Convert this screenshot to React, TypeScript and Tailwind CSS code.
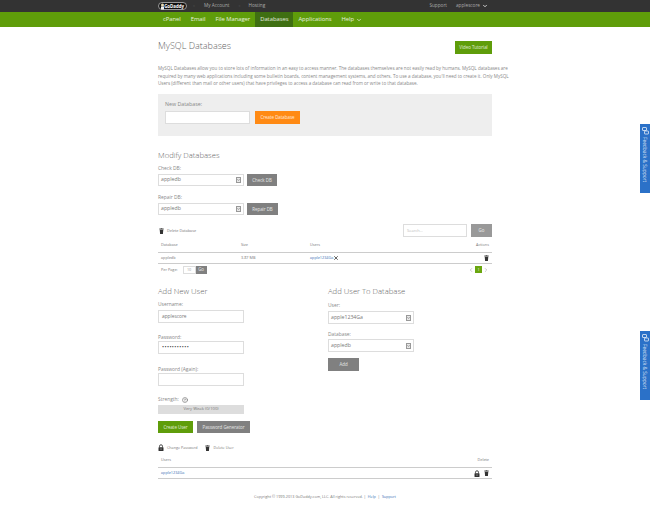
import { X, ChevronDown, ChevronLeft, ChevronRight, HelpCircle } from "lucide-react";

const nav = ["cPanel", "Email", "File Manager", "Databases", "Applications"];

function TrashIcon({ className = "" }: { className?: string }) {
  return (
    <svg width="5" height="6" viewBox="0 0 10 12" fill="#333" className={className}>
      <rect x="3.5" y="0" width="3" height="1.2" />
      <rect x="0.5" y="1.2" width="9" height="1.6" />
      <path d="M1.5 3.4h7l-.6 8.6H2.1z" />
    </svg>
  );
}

function LockIcon({ className = "" }: { className?: string }) {
  return (
    <svg width="6" height="7" viewBox="0 0 12 14" className={className}>
      <path d="M3 7V4.5a3 3 0 0 1 6 0V7" fill="none" stroke="#333" strokeWidth="1.7" />
      <rect x="1" y="6.5" width="10" height="7.5" rx="1" fill="#333" />
      <rect x="5.2" y="8.8" width="1.6" height="2.8" fill="#bbb" />
    </svg>
  );
}

function Heading({ children }: { children: React.ReactNode }) {
  return <h2 className="text-[7.7px] leading-[12px] font-light text-[#666]">{children}</h2>;
}

function Label({ children }: { children: React.ReactNode }) {
  return <div className="text-[4.9px] leading-[7px] text-[#888]">{children}</div>;
}

function Btn({ children, className }: { children: React.ReactNode; className: string }) {
  return (
    <div className={`flex items-center justify-center text-[4.4px] text-white/80 ${className}`}>{children}</div>
  );
}

function FakeSelect({ value, tall }: { value: string; tall?: boolean }) {
  return (
    <div className={`flex items-center justify-between w-[86px] bg-white border border-[#ddd] pl-[2px] pr-[2px] text-[5.2px] text-[#777] ${tall ? "h-[13px]" : "h-[12px]"}`}>
      <span>{value}</span>
      <span className="flex items-center justify-center w-[5px] h-[6px] bg-[#e8e8e8] border border-[#999]">
        <ChevronDown size={4} strokeWidth={4} className="text-[#333]" />
      </span>
    </div>
  );
}

function Field({ value, dots }: { value?: string; dots?: boolean }) {
  return (
    <div className={`flex items-center w-[86px] h-[13px] bg-white border border-[#ddd] px-[3px] ${dots ? "text-[5.5px] tracking-[0.4px] text-[#444]" : "text-[4.8px] text-[#777]"}`}>
      {value}
    </div>
  );
}

function FeedbackTab({ className }: { className: string }) {
  return (
    <div className={`absolute right-0 w-[10px] h-[69px] bg-[#2b71c8] flex flex-col items-center pt-[3px] gap-[2px] ${className}`}>
      <svg width="7" height="8" viewBox="0 0 14 16" fill="none" stroke="#fff" strokeWidth="1.4">
        <rect x="1" y="1" width="8" height="6" rx="1" />
        <rect x="5" y="8" width="8" height="6" rx="1" />
      </svg>
      <span className="[writing-mode:vertical-rl] text-[4.8px] leading-[8px] text-white/80 whitespace-nowrap">Feedback &amp; Support</span>
    </div>
  );
}

export default function App() {
  return (
    <div className="relative w-[650px] h-[523px] overflow-hidden bg-white font-['Open_Sans',sans-serif]">
      <div className="h-[12px] bg-[#333] flex justify-center">
        <div className="w-[334px] flex items-center text-[4.7px] text-[#aaa]">
          <div className="relative flex items-center justify-end h-[8px] w-[29px] rounded-full bg-[#111] border border-[#999] pr-[2px] text-[4.4px] leading-none font-bold text-white">
            <svg width="5" height="7" viewBox="0 0 10 14" className="absolute left-[1px] top-0">
              <circle cx="5" cy="4" r="3" fill="#e8d9b0" />
              <rect x="2" y="7" width="6" height="6" fill="#eee" />
            </svg>
            GoDaddy
          </div>
          <span className="text-[#555] ml-[6px] mr-[9px] text-[4px]">»</span>
          <span>My Account</span>
          <span className="text-[#555] ml-[9px] mr-[8px] text-[4px]">»</span>
          <span>Hosting</span>
          <span className="ml-auto">Support</span>
          <span className="ml-[9px]">applescore</span>
          <ChevronDown size={6} strokeWidth={3} className="ml-[2px] mr-[4px] text-white" />
        </div>
      </div>

      <div className="h-[15px] bg-[#5f9d0a] flex justify-center">
        <div className="w-[334px] flex text-[5.8px] text-white/85">
          {nav.map((n) => (
            <div key={n} className={`flex items-center px-[5px] ${n === "Databases" ? "bg-[#3f6f12]" : ""}`}>
              {n}
            </div>
          ))}
          <div className="flex items-center px-[5px] gap-[2px]">
            Help <ChevronDown size={6} strokeWidth={3} />
          </div>
        </div>
      </div>

      <div className="w-[334px] mx-auto">
        <div className="flex items-start justify-between mt-[14px] h-[13px]">
          <h1 className="text-[9px] leading-[12px] font-light text-[#666] -mt-px">MySQL Databases</h1>
          <Btn className="w-[37px] h-[13px] bg-[#5f9d0a]">Video Tutorial</Btn>
        </div>

        <p className="mt-[11px] text-[4.55px] leading-[7.5px] text-[#888] h-[23px] whitespace-nowrap">
          MySQL Databases allow you to store lots of information in an easy to access manner. The databases themselves are not easily read by humans. MySQL databases are
          <br />
          required by many web applications including some bulletin boards, content management systems, and others. To use a database, you'll need to create it. Only MySQL
          <br />
          Users (different than mail or other users) that have privileges to access a database can read from or write to that database.
        </p>

        <div className="mt-[6px] h-[42px] bg-[#eee] pt-[7px] pl-[7px]">
          <div className="text-[5.3px] leading-[7px] text-[#888]">New Database:</div>
          <div className="flex gap-[5px] mt-[3px]">
            <div className="w-[85px] h-[13px] bg-white border border-[#ddd]" />
            <Btn className="w-[45px] h-[13px] bg-[#ff8a14]">Create Database</Btn>
          </div>
        </div>

        <div className="mt-[13px]"><Heading>Modify Databases</Heading></div>
        <div className="mt-[4px]"><Label>Check DB:</Label></div>
        <div className="flex gap-[3px] mt-[2px]">
          <FakeSelect value="appledb" />
          <Btn className="w-[30px] h-[12px] bg-[#808080]">Check DB</Btn>
        </div>
        <div className="mt-[8px]"><Label>Repair DB:</Label></div>
        <div className="flex gap-[3px] mt-[2px]">
          <FakeSelect value="appledb" />
          <Btn className="w-[31px] h-[12px] bg-[#808080]">Repair DB</Btn>
        </div>

        <div className="flex items-center mt-[9px] h-[13px]">
          <TrashIcon className="ml-px" />
          <span className="ml-[3px] text-[3.8px] text-[#777]">Delete Database</span>
          <div className="ml-auto flex gap-[4px]">
            <div className="flex items-center w-[64px] h-[13px] border border-[#ddd] px-[3px] text-[4px] text-[#bbb]">Search...</div>
            <Btn className="w-[21px] h-[13px] bg-[#999]">Go</Btn>
          </div>
        </div>

        <div className="grid grid-cols-[80px_69px_1fr_auto] items-center h-[16px] border-b border-[#ccc] px-[3px] text-[3.8px] text-[#777]">
          <span>Database</span>
          <span>Size</span>
          <span>Users</span>
          <span>Actions</span>
        </div>
        <div className="grid grid-cols-[80px_69px_1fr_auto] items-center h-[11px] border-b border-[#ccc] px-[3px] text-[3.8px] text-[#777]">
          <span>appledb</span>
          <span>3.87 MB</span>
          <span className="flex items-center text-[#3a6fb5]">
            apple1234Ga
            <X size={6} strokeWidth={3} className="text-[#333]" />
          </span>
          <TrashIcon className="justify-self-end" />
        </div>
        <div className="flex items-center h-[11px] pl-[3px] text-[3.8px] text-[#777]">
          <span>Per Page:</span>
          <div className="flex items-center justify-center w-[13px] h-[8px] ml-[5px] border border-[#ddd] text-[#999]">10</div>
          <Btn className="w-[11px] h-[8px] bg-[#808080]">Go</Btn>
          <div className="ml-auto flex items-center gap-[1px] mr-[3px]">
            <ChevronLeft size={6} className="text-[#999]" />
            <div className="flex items-center justify-center w-[7px] h-[7px] bg-[#6aa60f] text-white">1</div>
            <ChevronRight size={6} className="text-[#999]" />
          </div>
        </div>

        <div className="flex mt-[10px] h-[158px]">
          <div className="w-[170px]">
            <Heading>Add New User</Heading>
            <div className="mt-[4px]"><Label>Username:</Label></div>
            <div className="mt-[2px]"><Field value="applescore" /></div>
            <div className="mt-[11px]"><Label>Password:</Label></div>
            <Field value="•••••••••••" dots />
            <div className="mt-[12px]"><Label>Password (Again):</Label></div>
            <Field />
            <div className="flex items-center mt-[10px] gap-[3px]">
              <Label>Strength:</Label>
              <HelpCircle size={6} className="text-[#555]" />
            </div>
            <div className="flex items-center justify-center mt-[2px] w-[86px] h-[9px] bg-[#ddd] text-[4.2px] text-[#777]">Very Weak (0/100)</div>
            <div className="flex gap-[4px] mt-[7px]">
              <Btn className="w-[35px] h-[12px] bg-[#5f9d0a]">Create User</Btn>
              <Btn className="w-[53px] h-[12px] bg-[#808080]">Password Generator</Btn>
            </div>
          </div>
          <div className="w-[164px]">
            <Heading>Add User To Database</Heading>
            <div className="mt-[5px]"><Label>User:</Label></div>
            <div className="mt-[2px]"><FakeSelect value="apple1234Ga" tall /></div>
            <div className="mt-[7px]"><Label>Database:</Label></div>
            <div className="mt-px"><FakeSelect value="appledb" tall /></div>
            <Btn className="w-[31px] h-[13px] mt-[6px] bg-[#808080]">Add</Btn>
          </div>
        </div>

        <div className="flex items-center h-[9px] text-[3.7px] text-[#777]">
          <LockIcon />
          <span className="ml-[3px]">Change Password</span>
          <TrashIcon className="ml-[7px]" />
          <span className="ml-[4px]">Delete User</span>
        </div>
        <div className="flex items-center justify-between h-[16px] border-b border-[#ccc] px-[3px] text-[3.8px] text-[#777]">
          <span>Users</span>
          <span>Delete</span>
        </div>
        <div className="flex items-center justify-between h-[11px] border-b border-[#ccc] pl-[3px] pr-[3px] text-[3.8px] text-[#3a6fb5]">
          <span>apple1234Ga</span>
          <span className="flex items-center gap-[4px]">
            <LockIcon />
            <TrashIcon />
          </span>
        </div>

        <div className="mt-[15px] flex justify-center text-[3.75px] text-[#777] whitespace-pre">
          Copyright © 1999-2013 GoDaddy.com, LLC. All rights reserved. |  <span className="text-[#3a6fb5]">Help</span>  |  <span className="text-[#3a6fb5]">Support</span>
        </div>
      </div>

      <FeedbackTab className="top-[124px]" />
      <FeedbackTab className="top-[331px]" />
    </div>
  );
}
